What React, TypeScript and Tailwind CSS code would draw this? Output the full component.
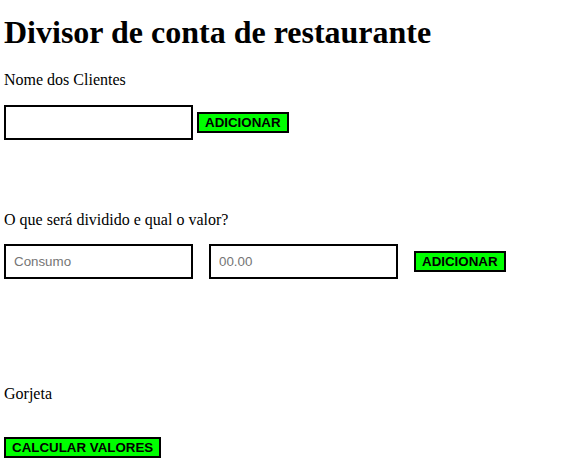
import { useState } from "react";

export default function App() {
  const [name, setName] = useState("");
  const [item, setItem] = useState("");
  const [value, setValue] = useState("");

  const btn =
    "h-[21px] px-[6px] flex items-center justify-center bg-[#00ff00] border-2 border-black text-black text-[13.33px] font-bold leading-none font-['Liberation_Sans',Arial,sans-serif]";
  const input =
    "w-[189px] h-[35px] border-2 border-black bg-white px-2 text-[13.33px] text-black placeholder:text-[#757575] outline-none font-['Liberation_Sans',Arial,sans-serif]";

  return (
    <div className="min-h-screen bg-white px-[4px] text-black font-['Liberation_Serif','Times_New_Roman',serif]">
      <h1 className="pt-[14px] text-[32px] font-bold leading-[37px]">Divisor de conta de restaurante</h1>

      <p className="mt-[20px] text-[16px] leading-[18px]">Nome dos Clientes</p>
      <div className="mt-[16px] flex items-center gap-[4px]">
        <input className={input} value={name} onChange={(e) => setName(e.target.value)} />
        <button className={btn}>ADICIONAR</button>
      </div>

      <p className="mt-[71px] text-[16px] leading-[18px]">O que será dividido e qual o valor?</p>
      <div className="mt-[15px] flex items-center gap-4">
        <input className={input} placeholder="Consumo" value={item} onChange={(e) => setItem(e.target.value)} />
        <input className={input} placeholder="00.00" value={value} onChange={(e) => setValue(e.target.value)} />
        <button className={btn}>ADICIONAR</button>
      </div>

      <p className="mt-[106px] text-[16px] leading-[18px]">Gorjeta</p>
      <div className="mt-[34px] flex">
        <button className={btn}>CALCULAR VALORES</button>
      </div>
    </div>
  );
}
